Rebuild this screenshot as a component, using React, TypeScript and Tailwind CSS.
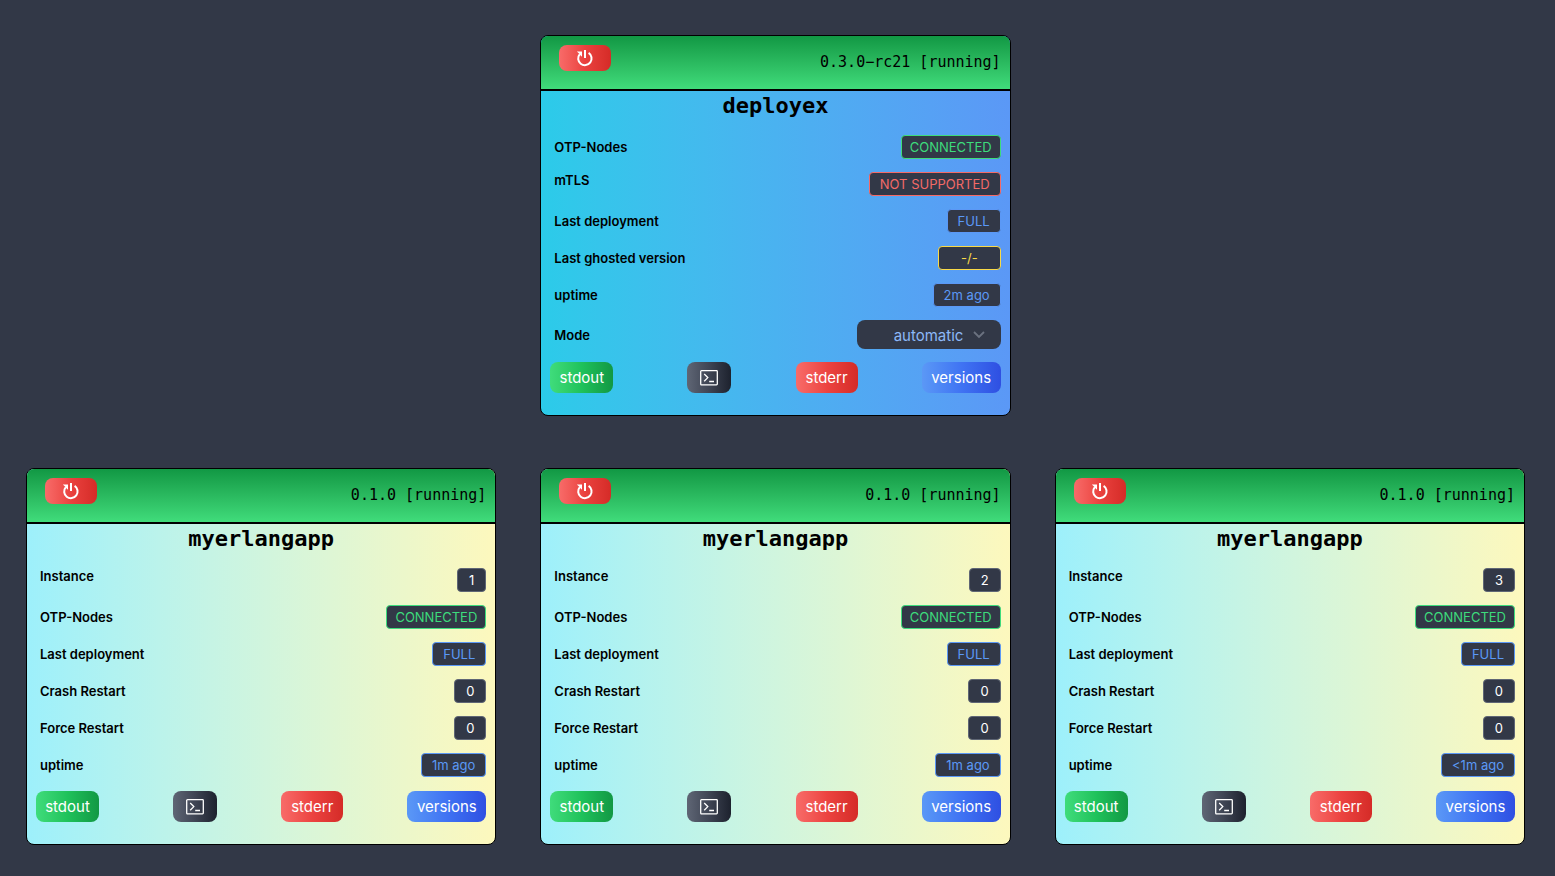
import type { ReactNode } from "react";

const badgeTones = {
  green: "border-[#3ddc7c] px-2 text-[#3ddc7c]",
  red: "border-[#f46a67] px-[10px] text-[#f46a67]",
  blue: "border-[#5b98f6] px-[10px] text-[#5b98f6]",
  yellow: "border-[#f9da48] px-[22px] text-[#f9da48]",
  plain: "border-[#5f6675] px-[11px] text-white",
};

type Row = {
  label: string;
  value: string;
  tone: keyof typeof badgeTones;
  top?: boolean;
};

type CardProps = {
  name: string;
  version: string;
  rows: Row[];
  surface: string;
  children?: ReactNode;
};

function RestartIcon() {
  return (
    <svg viewBox="0 0 18 18" className="size-[18px]" fill="none" stroke="currentColor" strokeWidth="2" aria-hidden="true">
      <path d="M12.6 3.9a6.7 6.7 0 1 1-8.8 1.2" />
      <path d="M9 1v8" />
      <path d="M0.8 2.6h5.2v5.2L4.2 6 3 4.4z" fill="currentColor" stroke="none" />
    </svg>
  );
}

function TerminalIcon() {
  return (
    <svg viewBox="0 0 18 16" className="h-4 w-[18px]" fill="none" stroke="currentColor" strokeWidth="1.3" aria-hidden="true">
      <rect x="0.7" y="0.7" width="16.6" height="14.2" rx="0.8" />
      <path d="M4.2 4l3.6 3.6-3.6 3.6M9.2 11.5h4.8" />
    </svg>
  );
}

function Actions() {
  const base = "h-[31px] rounded-lg text-[15px] leading-5 text-white bg-linear-to-r";
  return (
    <div className="flex items-center justify-between">
      <button type="button" className={`${base} mr-[10px] w-[63px] from-[#3fdc7b] via-[#1fc25b] to-[#129844]`}>stdout</button>
      <button type="button" aria-label="Terminal" className={`${base} flex w-11 items-center justify-center from-[#5f6675] via-[#3f4554] to-[#1d222e]`}>
        <TerminalIcon />
      </button>
      <button type="button" className={`${base} w-[62px] from-[#f86b69] via-[#ec4340] to-[#d52b27]`}>stderr</button>
      <button type="button" className={`${base} w-[79px] from-[#5b98f6] via-[#4073f3] to-[#2f4fe2]`}>versions</button>
    </div>
  );
}

function Card({ name, version, rows, surface, children }: CardProps) {
  return (
    <article className={`overflow-hidden rounded-lg border border-black bg-linear-to-r ${surface}`}>
      <header className="flex h-[55px] items-start justify-between border-b-2 border-black bg-linear-to-b from-[#119844] to-[#40dc7b] pt-[9px] pr-[9px] pl-[18px]">
        <button
          type="button"
          aria-label="Restart"
          className="flex h-[26px] w-[52px] items-center justify-center rounded-lg bg-linear-to-r from-[#f86b69] via-[#ea413e] to-[#d52b27] text-white"
        >
          <RestartIcon />
        </button>
        <p className="pt-[7px] font-['DejaVu_Sans_Mono',monospace] text-[15px] leading-5">{version}</p>
      </header>
      <div className="px-[9px] pb-[22px]">
        <h2 className="mb-[14px] text-center font-['DejaVu_Sans_Mono',monospace] text-[22px] leading-[30px] font-bold">{name}</h2>
        <dl className="mb-[14px] flex flex-col gap-[13px]">
          {rows.map((row) => (
            <div key={row.label} className={`flex h-6 justify-between ${row.top ? "items-start" : "items-center"}`}>
              <dt className="pl-1 text-[13px] leading-4 font-semibold">{row.label}</dt>
              <dd className={`h-6 rounded border bg-[#323847] text-[13px] leading-[22px] ${badgeTones[row.tone]}`}>
                {row.value}
              </dd>
            </div>
          ))}
        </dl>
        {children}
        <Actions />
      </div>
    </article>
  );
}

function ModeField() {
  return (
    <div className="-mt-px mb-[13px] flex items-center justify-between">
      <label htmlFor="mode" className="pl-1 text-[13px] leading-4 font-semibold">Mode</label>
      <div className="grid items-center">
        <select
          id="mode"
          className="col-start-1 row-start-1 h-[29px] w-36 appearance-none rounded-lg bg-[#323847] pt-0.5 pl-[37px] text-[15px] leading-5 text-[#8db9f8]"
        >
          <option>automatic</option>
          <option>manual</option>
        </select>
        <svg viewBox="0 0 12 8" className="pointer-events-none col-start-1 row-start-1 mr-4 h-2 w-3 justify-self-end" fill="none" stroke="#6b7280" strokeWidth="1.8" aria-hidden="true">
          <path d="M1 1l5 5 5-5" />
        </svg>
      </div>
    </div>
  );
}

const hostRows: Row[] = [
  { label: "OTP-Nodes", value: "CONNECTED", tone: "green" },
  { label: "mTLS", value: "NOT SUPPORTED", tone: "red", top: true },
  { label: "Last deployment", value: "FULL", tone: "blue" },
  { label: "Last ghosted version", value: "-/-", tone: "yellow" },
  { label: "uptime", value: "2m ago", tone: "blue" },
];

const instances = [
  { id: "1", uptime: "1m ago" },
  { id: "2", uptime: "1m ago" },
  { id: "3", uptime: "<1m ago" },
];

function instanceRows(id: string, uptime: string): Row[] {
  return [
    { label: "Instance", value: id, tone: "plain", top: true },
    { label: "OTP-Nodes", value: "CONNECTED", tone: "green" },
    { label: "Last deployment", value: "FULL", tone: "blue" },
    { label: "Crash Restart", value: "0", tone: "plain" },
    { label: "Force Restart", value: "0", tone: "plain" },
    { label: "uptime", value: uptime, tone: "blue" },
  ];
}

export default function App() {
  return (
    <main className="min-h-screen bg-[#323847] pt-[35px] pr-[30px] pb-[31px] pl-[26px] font-[Inter,sans-serif] text-black">
      <div className="grid grid-cols-3 gap-x-11 gap-y-[52px]">
        <div className="col-start-2">
          <Card name="deployex" version="0.3.0−rc21 [running]" rows={hostRows} surface="from-[#2bcbe9] to-[#5b98f6]">
            <ModeField />
          </Card>
        </div>
        {instances.map(({ id, uptime }, index) => (
          <div key={id} className={index === 0 ? "col-start-1" : ""}>
            <Card name="myerlangapp" version="0.1.0 [running]" rows={instanceRows(id, uptime)} surface="from-[#9df0fb] to-[#fdf8bd]" />
          </div>
        ))}
      </div>
    </main>
  );
}
